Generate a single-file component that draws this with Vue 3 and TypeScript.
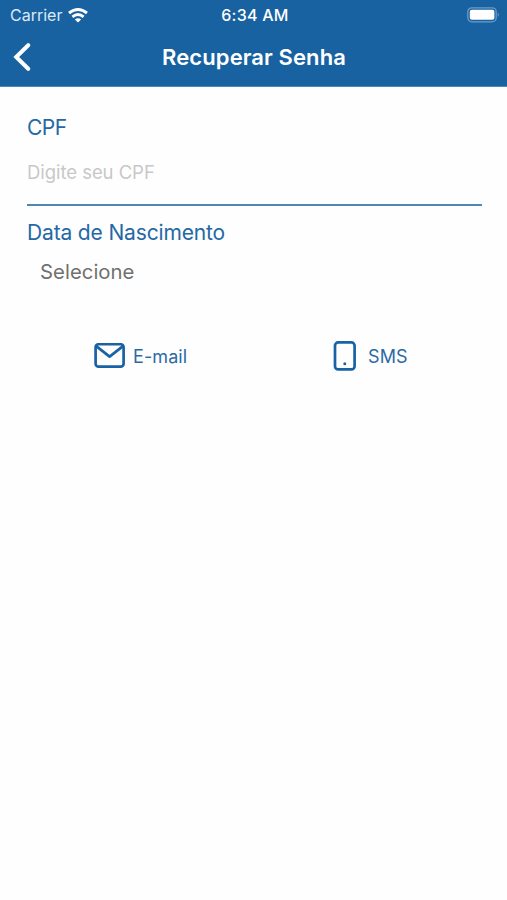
<script setup lang="ts">
import { ref } from 'vue'

const cpf = ref('')
const birthDate = ref('Selecione')
</script>

<template>
  <main class="screen">
    <header class="header">
      <div class="status">
        <div class="network">
          <span class="carrier">Carrier</span>
          <svg class="wifi" width="20" height="15" viewBox="0 0 20 15" fill="none" stroke="#fff" stroke-width="2.9">
            <path d="M1 5Q10 -2 19 5" />
            <path d="M4.4 8.8Q10 4.1 15.6 8.8" />
            <path d="M10 14.6L6.9 11.5Q10 9.2 13.1 11.5Z" fill="#fff" stroke="none" />
          </svg>
        </div>
        <span class="time">6:34 AM</span>
        <svg class="battery" width="33" height="16" viewBox="0 0 33 16">
          <rect x="0.8" y="0.8" width="28.4" height="14" rx="4" fill="none" stroke="#6b9bc7" stroke-width="1.3" />
          <rect x="2.8" y="2.8" width="24.6" height="10" rx="2" fill="#fff" />
          <path d="M30.7 5.5Q33.2 7.8 30.7 10Z" fill="#5e92c0" />
        </svg>
      </div>
      <nav class="navbar">
        <button class="back" aria-label="Voltar">
          <svg width="18" height="28" viewBox="0 0 18 28" fill="none" stroke="#fff" stroke-width="4" stroke-linecap="round" stroke-linejoin="miter">
            <path d="M15.2 2.2L3.2 14L15.2 25.8" />
          </svg>
        </button>
        <h1 class="title">Recuperar Senha</h1>
        <span></span>
      </nav>
    </header>
    <form class="form" @submit.prevent>
      <label class="label cpf-label" for="cpf">CPF</label>
      <input id="cpf" v-model="cpf" class="input" placeholder="Digite seu CPF" inputmode="numeric" />
      <span class="label date-label">Data de Nascimento</span>
      <button type="button" class="date">{{ birthDate }}</button>
      <div class="options">
        <button type="button" class="option">
          <svg class="mail" width="31" height="26" viewBox="0 0 31 26" fill="none" stroke="#1962a3" stroke-width="2.7" stroke-linejoin="round">
            <rect x="1.6" y="1.2" width="28" height="22.5" rx="3" />
            <path d="M2.2 3.1L15.6 13.6L29 3.1" />
          </svg>
          <span class="email-text">E-mail</span>
        </button>
        <button type="button" class="option sms">
          <svg class="phone" width="23" height="31" viewBox="0 0 23 31" fill="none" stroke="#1962a3" stroke-width="2.7">
            <rect x="2" y="1.4" width="19.6" height="27" rx="3.2" />
            <circle cx="11.8" cy="22.7" r="1.5" fill="#1962a3" stroke="none" />
          </svg>
          <span class="sms-text">SMS</span>
        </button>
      </div>
    </form>
  </main>
</template>

<style>
body {
  background: #fff;
}
</style>

<style scoped>
.screen {
  width: 507px;
  height: 900px;
  overflow: hidden;
  background: #fefefe;
  font-family: Inter, "Liberation Sans", sans-serif;
}

button {
  border: 0;
  padding: 0;
  background: none;
  font-family: inherit;
  text-align: left;
}

svg {
  display: block;
  flex: none;
}

.header {
  box-sizing: border-box;
  height: 87px;
  background: #1962a1;
  border-bottom: 1px solid #5288b8;
  color: #fff;
}

.status {
  display: grid;
  grid-template-columns: 1fr auto 1fr;
  align-items: center;
  height: 30px;
  padding: 0 7px 0 10px;
}

.network {
  display: flex;
  align-items: center;
  gap: 6px;
}

.carrier {
  width: 52px;
  color: #dce9f5;
  font-size: 16px;
  white-space: nowrap;
}

.time {
  font-size: 16px;
  font-weight: 500;
  letter-spacing: 0.25px;
}

.battery {
  justify-self: end;
}

.navbar {
  display: grid;
  grid-template-columns: 1fr auto 1fr;
  align-items: center;
  height: 54px;
  padding: 0 12px 0 13px;
}

.title {
  margin: 0;
  font-size: 22px;
  font-weight: 600;
  letter-spacing: 0.1px;
  line-height: 28px;
  white-space: nowrap;
}

.form {
  display: flex;
  flex-direction: column;
  padding: 27px 25px 0 27px;
}

.label {
  color: #2468a5;
  font-size: 21px;
  letter-spacing: -0.15px;
  line-height: 28px;
}

.cpf-label {
  letter-spacing: -0.5px;
}

.input {
  box-sizing: border-box;
  width: 100%;
  height: 64px;
  margin: 0;
  padding: 0 0 3px;
  border: 0;
  border-bottom: 2px solid #4c87b6;
  outline: 0;
  background: transparent;
  font-family: inherit;
  font-size: 18.5px;
  letter-spacing: -0.05px;
}

.input::placeholder {
  color: #c8c8c8;
  opacity: 1;
}

.date-label {
  margin-top: 13px;
}

.date {
  height: 28px;
  margin-top: 11px;
  padding-left: 13px;
  color: #707070;
  font-size: 20.3px;
  letter-spacing: 0.05px;
  line-height: 28px;
}

.options {
  display: grid;
  grid-template-columns: 239px 1fr;
  margin: 54px 0 0 67px;
}

.option {
  display: flex;
  align-items: center;
  height: 32px;
  gap: 8px;
  color: #2b6ba5;
  font-size: 18px;
  letter-spacing: 0.1px;
}

.sms {
  gap: 12px;
}
</style>
